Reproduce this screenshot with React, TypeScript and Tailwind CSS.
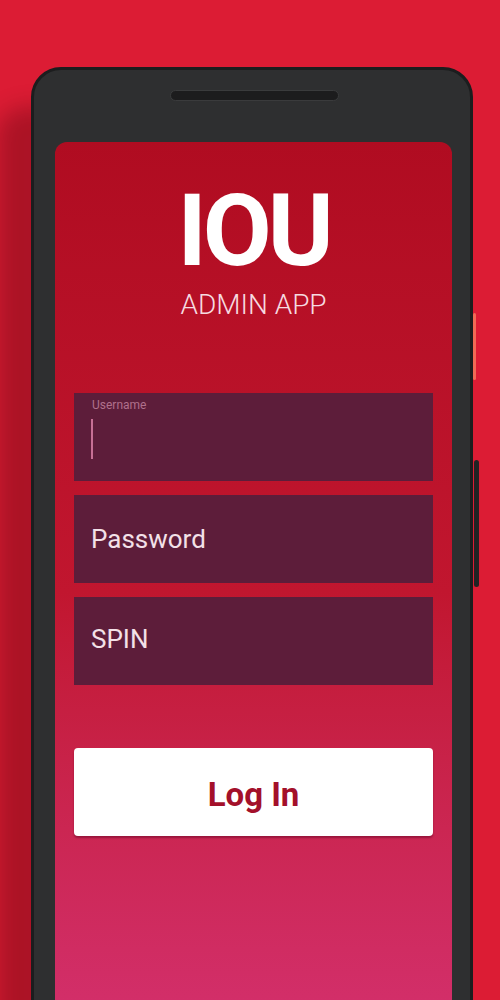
import React from 'react';

const font = { fontFamily: 'Roboto, "Liberation Sans", sans-serif' };

function Field({ children }: { children: React.ReactNode }) {
  return (
    <div className="relative h-[88px] w-full bg-[#5d1d3a] flex items-center px-[17px]">
      {children}
    </div>
  );
}

export default function App() {
  return (
    <div className="h-[1000px] w-[500px] overflow-hidden bg-[#dc1c34]" style={font}>
      {/* Phone body */}
      <div className="relative ml-[31px] mt-[67px] w-[442px] h-[1000px] rounded-[30px] bg-[#2e2f30] border-[3px] border-[#1c1d1e] pt-[72px] pl-[21px] pr-[18px] shadow-[-34px_40px_22px_rgba(70,0,10,0.32)]">
        {/* speaker */}
        <div className="absolute left-[136px] top-[20px] w-[169px] h-[11px] rounded-full bg-[#1c1c1d] border border-[#3a3b3c]" />
        {/* side buttons */}
        <div className="absolute -right-[6px] top-[243px] w-[3px] h-[67px] rounded-sm bg-[#f06a55]" />
        <div className="absolute -right-[9px] top-[390px] w-[5px] h-[127px] rounded-sm bg-[#222324]" />

        {/* Screen */}
        <div className="h-[900px] rounded-t-[12px] bg-gradient-to-b from-[#b00c21] via-[#c1162f] to-[#d4306e] px-[19px] pt-[39px] flex flex-col">
          <div className="flex flex-col items-center">
            <h1 className="text-[100px] leading-none font-bold text-white tracking-[-0.04em]">IOU</h1>
            <p className="mt-[10px] text-[28px] leading-none font-light text-[#f6dbe0]">ADMIN APP</p>
          </div>

          <div className="mt-[74px] flex flex-col gap-[14px]">
            <Field>
              <span className="absolute left-[18px] top-[3px] text-[12px] text-[#b0708c]">Username</span>
              <span className="mt-[3px] w-[2px] h-[40px] bg-[#c77095]" />
            </Field>
            <Field>
              <span className="text-[26px] text-[#f3e1e8]">Password</span>
            </Field>
            <Field>
              <span className="text-[26px] text-[#f3e1e8] -mt-[3px]">SPIN</span>
            </Field>
          </div>

          <button className="mt-[63px] h-[88px] w-full rounded-[4px] bg-white shadow-[0_2px_2px_rgba(90,0,30,0.45)] pt-[6px] text-[33px] font-bold text-[#a3102a]">
            Log In
          </button>
        </div>
      </div>
    </div>
  );
}
